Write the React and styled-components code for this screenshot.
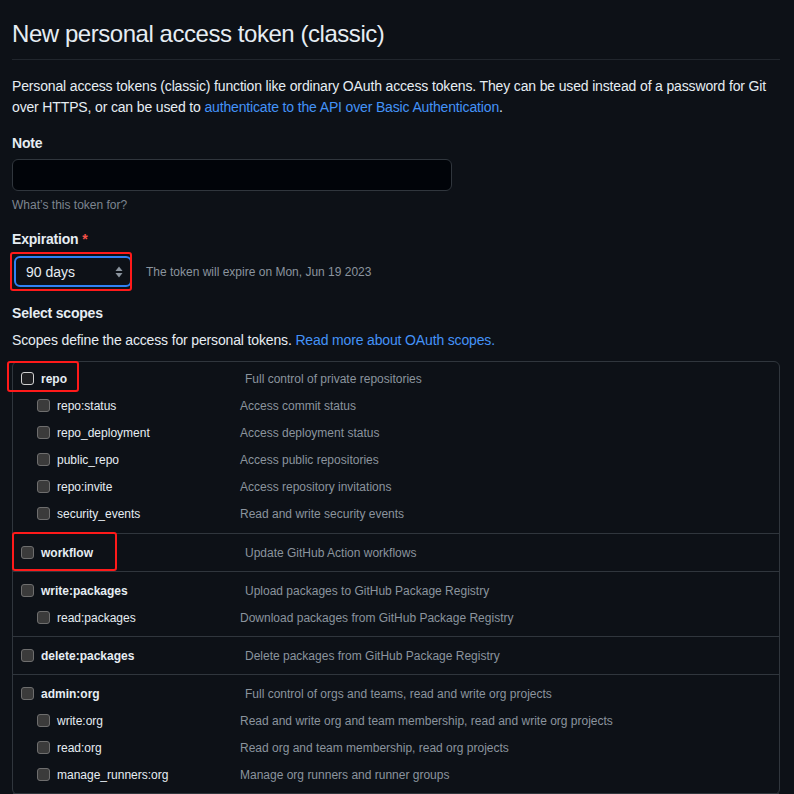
import React from "react";
import styled, { createGlobalStyle } from "styled-components";

const scopes = [
  {
    name: "repo",
    desc: "Full control of private repositories",
    focused: true,
    mark: { top: -11, left: -14, width: 72, height: 31 },
    children: [
      ["repo:status", "Access commit status"],
      ["repo_deployment", "Access deployment status"],
      ["public_repo", "Access public repositories"],
      ["repo:invite", "Access repository invitations"],
      ["security_events", "Read and write security events"],
    ],
  },
  {
    name: "workflow",
    desc: "Update GitHub Action workflows",
    mark: { top: -14, left: -9, width: 105, height: 39 },
    children: [],
  },
  {
    name: "write:packages",
    desc: "Upload packages to GitHub Package Registry",
    children: [["read:packages", "Download packages from GitHub Package Registry"]],
  },
  {
    name: "delete:packages",
    desc: "Delete packages from GitHub Package Registry",
    children: [],
  },
  {
    name: "admin:org",
    desc: "Full control of orgs and teams, read and write org projects",
    children: [
      ["write:org", "Read and write org and team membership, read and write org projects"],
      ["read:org", "Read org and team membership, read org projects"],
      ["manage_runners:org", "Manage org runners and runner groups"],
    ],
  },
];

const App = () => {
  return (
    <>
      <GlobalStyle />
      <Page>
        <Title>New personal access token (classic)</Title>
        <Intro>
          Personal access tokens (classic) function like ordinary OAuth access tokens. They can be
          used instead of a password for Git over HTTPS, or can be used to{" "}
          <Link href="#">authenticate to the API over Basic Authentication</Link>.
        </Intro>

        <Field>
          <Label>Note</Label>
          <TextInput />
          <Hint>What’s this token for?</Hint>
        </Field>

        <Field>
          <Label>
            Expiration <Required>*</Required>
          </Label>
          <SelectRow>
            <Marked>
              <Select>
                <span>90 days</span>
                <svg width="8" height="12" viewBox="0 0 8 12">
                  <path d="M4 0.5 L7.5 5 H0.5 Z" fill="#8b949e" />
                  <path d="M4 11.5 L7.5 7 H0.5 Z" fill="#8b949e" />
                </svg>
              </Select>
              <Highlight $top={-4} $left={-2} $width={122} $height={39} />
            </Marked>
            <ExpireNote>The token will expire on Mon, Jun 19 2023</ExpireNote>
          </SelectRow>
        </Field>

        <Label>Select scopes</Label>
        <ScopesIntro>
          Scopes define the access for personal tokens.{" "}
          <Link href="#">Read more about OAuth scopes.</Link>
        </ScopesIntro>

        <ScopeBox>
          {scopes.map((group) => (
            <Group key={group.name}>
              <ScopeRow>
                <ScopeCell>
                  <Marked>
                    <Checkbox $focused={group.focused} />
                    {group.mark && (
                      <Highlight
                        $top={group.mark.top}
                        $left={group.mark.left}
                        $width={group.mark.width}
                        $height={group.mark.height}
                      />
                    )}
                  </Marked>
                  <ScopeName $parent>{group.name}</ScopeName>
                </ScopeCell>
                <ScopeDesc $parent>{group.desc}</ScopeDesc>
              </ScopeRow>
              {group.children.map(([name, desc]) => (
                <ScopeRow key={name} $child>
                  <ScopeCell $child>
                    <Checkbox />
                    <ScopeName>{name}</ScopeName>
                  </ScopeCell>
                  <ScopeDesc>{desc}</ScopeDesc>
                </ScopeRow>
              ))}
            </Group>
          ))}
        </ScopeBox>
      </Page>
    </>
  );
};

export default App;

const GlobalStyle = createGlobalStyle`
  html, body {
    margin: 0;
    background: #0d1117;
    color: #c9d1d9;
    font-family: "Liberation Sans", Arial, sans-serif;
  }
`;

const Page = styled.div`
  width: 768px;
  padding: 19px 14px 0 12px;
  height: 775px;
  overflow: hidden;
`;

const Title = styled.h1`
  margin: 0;
  padding-bottom: 10px;
  border-bottom: 1px solid #21262d;
  font-size: 24px;
  line-height: 30px;
  font-weight: 400;
  letter-spacing: -0.45px;
  color: #e6edf3;
`;

const Intro = styled.p`
  margin: 16px 0 15px;
  font-size: 14px;
  line-height: 21px;
  letter-spacing: -0.15px;
  color: #e6edf3;
`;

const Link = styled.a`
  color: #4493f8;
  text-decoration: none;
`;

const Field = styled.div`
  margin-bottom: 15px;
`;

const Label = styled.div`
  font-size: 14px;
  line-height: 21px;
  font-weight: 700;
  letter-spacing: -0.2px;
  color: #e6edf3;
`;

const Required = styled.span`
  color: #f85149;
`;

const TextInput = styled.div`
  margin-top: 5px;
  width: 438px;
  height: 30px;
  background: #010409;
  border: 1px solid #30363d;
  border-radius: 6px;
`;

const Hint = styled.div`
  margin-top: 5px;
  font-size: 12px;
  line-height: 18px;
  color: #7d8590;
`;

const SelectRow = styled.div`
  display: flex;
  align-items: center;
  gap: 14px;
  margin-top: 6px;
  margin-bottom: 16px;
`;

const Marked = styled.span`
  position: relative;
  display: inline-flex;
`;

const Highlight = styled.span`
  position: absolute;
  top: ${({ $top }) => $top}px;
  left: ${({ $left }) => $left}px;
  width: ${({ $width }) => $width}px;
  height: ${({ $height }) => $height}px;
  border: 2px solid #ff1a1a;
  border-radius: 3px;
  box-sizing: border-box;
  pointer-events: none;
`;

const Select = styled.div`
  box-sizing: border-box;
  width: 118px;
  height: 31px;
  margin-left: 2px;
  padding: 0 7px 0 10px;
  display: flex;
  align-items: center;
  justify-content: space-between;
  background: #0d1117;
  border: 2px solid #2f81f7;
  border-radius: 6px;
  font-size: 14px;
  color: #e6edf3;
`;

const ExpireNote = styled.span`
  font-size: 12px;
  color: #8b949e;
`;

const ScopesIntro = styled.p`
  margin: 6px 0 10px;
  font-size: 14px;
  line-height: 21px;
  letter-spacing: -0.15px;
  color: #e6edf3;
`;

const ScopeBox = styled.div`
  border: 1px solid #30363d;
  border-radius: 6px;
`;

const Group = styled.div`
  padding: 5px 0;
  border-bottom: 1px solid #30363d;
  &:first-child {
    padding: 3px 0 6px;
  }
`;

const ScopeRow = styled.div`
  display: flex;
  align-items: center;
  height: 27px;
  padding-left: ${({ $child }) => ($child ? "24px" : "8px")};
`;

const ScopeCell = styled.div`
  display: flex;
  align-items: center;
  gap: 7px;
  width: ${({ $child }) => ($child ? "203px" : "224px")};
  flex-shrink: 0;
`;

const Checkbox = styled.span`
  box-sizing: border-box;
  width: 13px;
  height: 13px;
  border-radius: 3px;
  background: ${({ $focused }) => ($focused ? "#1e1f22" : "#3b3b3b")};
  border: 1px solid ${({ $focused }) => ($focused ? "#d0d0d0" : "#6e6e6e")};
`;

const ScopeName = styled.span`
  font-size: 12px;
  font-weight: ${({ $parent }) => ($parent ? 700 : 400)};
  color: #e6edf3;
`;

const ScopeDesc = styled.span`
  font-size: 12px;
  color: #8b949e;
`;
